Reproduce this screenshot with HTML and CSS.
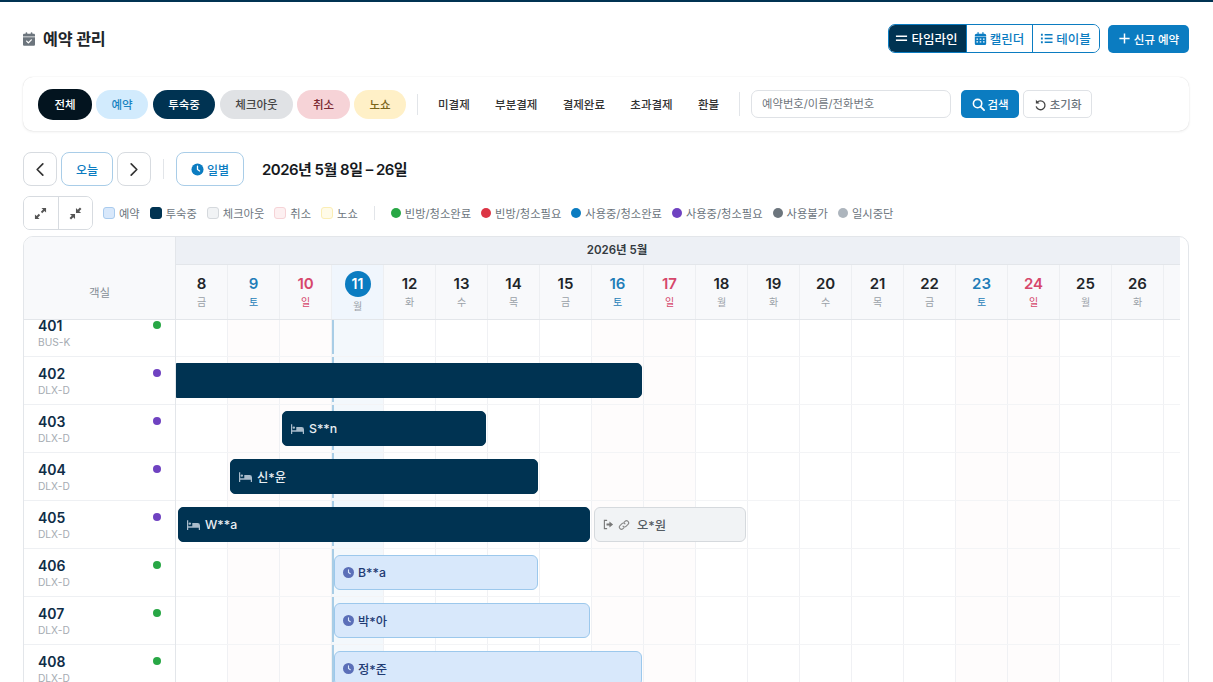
FILE: index.html
```html
<!DOCTYPE html>
<html lang="ko">
<head>
<meta charset="utf-8">
<title>예약 관리</title>
<link rel="stylesheet" href="styles.css">
</head>
<body>
<main class="page">
  <header class="head">
    <h1 class="title">
      <svg class="title-icon" viewBox="0 0 448 512"><path d="M128 0c18 0 32 14 32 32v32h128V32c0-18 14-32 32-32s32 14 32 32v32h48c27 0 48 21 48 48v48H0v-48c0-27 21-48 48-48h48V32c0-18 14-32 32-32zM0 192h448v272c0 27-21 48-48 48H48c-27 0-48-21-48-48V192zm329 113c9-9 9-25 0-34s-25-9-34 0l-95 95-47-47c-9-9-25-9-34 0s-9 25 0 34l64 64c9 9 25 9 34 0l112-112z"/></svg>
      <span>예약 관리</span>
    </h1>
    <div class="head-actions">
      <div class="seg">
        <button class="seg-btn seg-on"><svg class="ic" viewBox="0 0 14 14"><path d="M1 3.800h12v1.700H1zM1 8h12v1.700H1z"/></svg>타임라인</button>
        <button class="seg-btn"><svg class="ic" viewBox="0 0 448 512"><path d="M128 0c14 0 24 11 24 24v40h144V24c0-13 11-24 24-24s24 11 24 24v40h40c35 0 64 29 64 64v48H0v-48c0-35 29-64 64-64h40V24c0-13 11-24 24-24zM0 192h448v256c0 35-29 64-64 64H64c-35 0-64-29-64-64V192zm64 64v48h64v-48H64zm128 0v48h64v-48h-64zm128 0v48h64v-48h-64zM64 368v48h64v-48H64zm128 0v48h64v-48h-64zm128 0v48h64v-48h-64z"/></svg>캘린더</button>
        <button class="seg-btn"><svg class="ic" viewBox="0 0 14 14"><path d="M1 2h2v2H1zM5 2.200h8.500v1.600H5zM1 6h2v2H1zM5 6.200h8.500v1.600H5zM1 10h2v2H1zM5 10.200h8.500v1.600H5z"/></svg>테이블</button>
      </div>
      <button class="new-btn"><svg class="ic" viewBox="0 0 14 14"><path d="M6.200 1.500h1.600v4.700h4.700v1.600H7.800v4.700H6.200V7.800H1.500V6.200h4.700z"/></svg>신규 예약</button>
    </div>
  </header>

  <section class="filters">
    <button class="pill pill-all">전체</button>
    <button class="pill pill-res">예약</button>
    <button class="pill pill-stay">투숙중</button>
    <button class="pill pill-out">체크아웃</button>
    <button class="pill pill-cancel">취소</button>
    <button class="pill pill-noshow">노쇼</button>
    <i class="vsep sep-a"></i>
    <div class="pay">
      <span>미결제</span><span>부분결제</span><span>결제완료</span><span>초과결제</span><span>환불</span>
    </div>
    <i class="vsep sep-b"></i>
    <input class="search" type="text" placeholder="예약번호/이름/전화번호">
    <button class="search-btn"><svg class="ic" viewBox="0 0 14 14"><circle cx="6" cy="6" r="4.500" fill="none" stroke="currentColor" stroke-width="1.700"/><path d="M9.300 9.300l3.700 3.700" stroke="currentColor" stroke-width="1.900" stroke-linecap="round"/></svg>검색</button>
    <button class="reset-btn"><svg class="ic" viewBox="0 0 14 14"><path d="M3.300 4.800A4.800 4.800 0 1 1 2.500 9.500" fill="none" stroke="currentColor" stroke-width="1.400" stroke-linecap="round"/><path d="M2 1.800v4h4z" fill="currentColor"/></svg>초기화</button>
  </section>

  <nav class="toolbar">
    <button class="tool tool-square"><svg class="chev" viewBox="0 0 10 16"><path d="M8 2L2 8l6 6" fill="none" stroke="currentColor" stroke-width="1.800" stroke-linecap="round" stroke-linejoin="round"/></svg></button>
    <button class="tool tool-blue tool-today">오늘</button>
    <button class="tool tool-square"><svg class="chev" viewBox="0 0 10 16"><path d="M2 2l6 6-6 6" fill="none" stroke="currentColor" stroke-width="1.800" stroke-linecap="round" stroke-linejoin="round"/></svg></button>
    <i class="vsep tool-sep"></i>
    <button class="tool tool-blue tool-day"><svg class="ic clock" viewBox="0 0 14 14"><circle cx="7" cy="7" r="6.500" fill="currentColor"/><path d="M7 3.500V7l2.300 1.600" fill="none" stroke="#fff" stroke-width="1.400" stroke-linecap="round"/></svg>일별</button>
    <h2 class="range">2026년 5월 8일 – 26일</h2>
  </nav>

  <div class="legend">
    <div class="zoom-group">
      <button class="zoom-btn"><svg viewBox="0 0 14 14"><path d="M8 1h5v5l-1.800-1.800-2.400 2.400-1.400-1.400 2.400-2.400zM6 13H1V8l1.800 1.800 2.400-2.400 1.400 1.400-2.400 2.400z"/></svg></button>
      <button class="zoom-btn"><svg viewBox="0 0 14 14"><path d="M13 6.500H7.500V1l1.900 1.900L11.800.600 13.400 2.200 11 4.600zM1 7.500h5.500V13l-1.900-1.900-2.400 2.300L.6 11.800 3 9.400z"/></svg></button>
    </div>
    <span class="lg"><i class="sw sw-res"></i>예약</span>
    <span class="lg"><i class="sw sw-stay"></i>투숙중</span>
    <span class="lg"><i class="sw sw-out"></i>체크아웃</span>
    <span class="lg"><i class="sw sw-cancel"></i>취소</span>
    <span class="lg"><i class="sw sw-noshow"></i>노쇼</span>
    <i class="vsep lg-sep"></i>
    <span class="lg"><i class="dot d-green"></i>빈방/청소완료</span>
    <span class="lg"><i class="dot d-red"></i>빈방/청소필요</span>
    <span class="lg"><i class="dot d-blue"></i>사용중/청소완료</span>
    <span class="lg"><i class="dot d-purple"></i>사용중/청소필요</span>
    <span class="lg"><i class="dot d-gray"></i>사용불가</span>
    <span class="lg"><i class="dot d-light"></i>일시중단</span>
  </div>

  <section class="timeline">
    <div class="tl-head">
      <div class="corner">객실</div>
      <div class="head-right">
        <div class="month">2026년 5월</div>
        <div class="days">
          <div class="day"><b>8</b><small>금</small></div>
          <div class="day sat"><b>9</b><small>토</small></div>
          <div class="day sun"><b>10</b><small>일</small></div>
          <div class="day today"><b>11</b><small>월</small></div>
          <div class="day"><b>12</b><small>화</small></div>
          <div class="day"><b>13</b><small>수</small></div>
          <div class="day"><b>14</b><small>목</small></div>
          <div class="day"><b>15</b><small>금</small></div>
          <div class="day sat"><b>16</b><small>토</small></div>
          <div class="day sun"><b>17</b><small>일</small></div>
          <div class="day"><b>18</b><small>월</small></div>
          <div class="day"><b>19</b><small>화</small></div>
          <div class="day"><b>20</b><small>수</small></div>
          <div class="day"><b>21</b><small>목</small></div>
          <div class="day"><b>22</b><small>금</small></div>
          <div class="day sat"><b>23</b><small>토</small></div>
          <div class="day sun"><b>24</b><small>일</small></div>
          <div class="day"><b>25</b><small>월</small></div>
          <div class="day"><b>26</b><small>화</small></div>
          <div class="day"></div>
        </div>
      </div>
    </div>
    <div class="tl-body">
      <div class="rooms">
        <div class="room"><div><b>401</b><small>BUS-K</small></div><i class="dot room-dot d-green"></i></div>
        <div class="room"><div><b>402</b><small>DLX-D</small></div><i class="dot room-dot d-purple"></i></div>
        <div class="room"><div><b>403</b><small>DLX-D</small></div><i class="dot room-dot d-purple"></i></div>
        <div class="room"><div><b>404</b><small>DLX-D</small></div><i class="dot room-dot d-purple"></i></div>
        <div class="room"><div><b>405</b><small>DLX-D</small></div><i class="dot room-dot d-purple"></i></div>
        <div class="room"><div><b>406</b><small>DLX-D</small></div><i class="dot room-dot d-green"></i></div>
        <div class="room"><div><b>407</b><small>DLX-D</small></div><i class="dot room-dot d-green"></i></div>
        <div class="room"><div><b>408</b><small>DLX-D</small></div><i class="dot room-dot d-green"></i></div>
      </div>
      <div class="lanes">
        <div class="cols">
          <i></i><i class="c-we"></i><i class="c-we"></i><i class="c-today"></i><i></i><i></i><i></i><i></i><i class="c-we"></i><i class="c-we"></i><i></i><i></i><i></i><i></i><i></i><i class="c-we"></i><i class="c-we"></i><i></i><i></i><i></i>
        </div>
        <div class="now-line"></div>
        <div class="lane"></div>
        <div class="lane"><div class="bar stay b402"></div></div>
        <div class="lane"><div class="bar stay b403"><svg class="bed" viewBox="0 0 16 12"><path d="M0 0h1.500v7.500H6.500V3.500H13a3 3 0 0 1 3 3V12h-1.500V9.500h-13V12H0zM2 4.300a1.500 1.500 0 1 1 3 0 1.500 1.500 0 0 1-3 0z"/></svg>S**n</div></div>
        <div class="lane"><div class="bar stay b404"><svg class="bed" viewBox="0 0 16 12"><path d="M0 0h1.500v7.500H6.500V3.500H13a3 3 0 0 1 3 3V12h-1.500V9.500h-13V12H0zM2 4.300a1.500 1.500 0 1 1 3 0 1.500 1.500 0 0 1-3 0z"/></svg>신*윤</div></div>
        <div class="lane">
          <div class="bar stay b405"><svg class="bed" viewBox="0 0 16 12"><path d="M0 0h1.500v7.500H6.500V3.500H13a3 3 0 0 1 3 3V12h-1.500V9.500h-13V12H0zM2 4.300a1.500 1.500 0 1 1 3 0 1.500 1.500 0 0 1-3 0z"/></svg>W**a</div>
          <div class="bar out b405b">
            <svg class="out-ic" viewBox="0 0 12 12"><path d="M4 1.500H1.500v9H4" fill="none" stroke="currentColor" stroke-width="1.200" stroke-linecap="round"/><path d="M3.800 5h3.200V2.800L11 6 7 9.200V7H3.800z" fill="currentColor"/></svg>
            <svg class="link-ic" viewBox="0 0 12 12"><path d="M5 7.200a2 2 0 0 0 3 .2l2-2a2.100 2.100 0 0 0-3-3l-.8.800M7 4.800a2 2 0 0 0-3-.2l-2 2a2.100 2.100 0 0 0 3 3l.8-.8" fill="none" stroke="currentColor" stroke-width="1.100" stroke-linecap="round"/></svg>
            오*원
          </div>
        </div>
        <div class="lane"><div class="bar res b406"><svg class="res-ic" viewBox="0 0 14 14"><circle cx="7" cy="7" r="7" fill="currentColor"/><path d="M7 3.500V7l2.300 1.600" fill="none" stroke="#d9e8fb" stroke-width="1.400" stroke-linecap="round"/></svg>B**a</div></div>
        <div class="lane"><div class="bar res b407"><svg class="res-ic" viewBox="0 0 14 14"><circle cx="7" cy="7" r="7" fill="currentColor"/><path d="M7 3.500V7l2.300 1.600" fill="none" stroke="#d9e8fb" stroke-width="1.400" stroke-linecap="round"/></svg>박*아</div></div>
        <div class="lane"><div class="bar res b408"><svg class="res-ic" viewBox="0 0 14 14"><circle cx="7" cy="7" r="7" fill="currentColor"/><path d="M7 3.500V7l2.300 1.600" fill="none" stroke="#d9e8fb" stroke-width="1.400" stroke-linecap="round"/></svg>정*준</div></div>
      </div>
    </div>
  </section>
</main>
</body>
</html>
```

FILE: styles.css
```css
* { box-sizing: border-box; }
html, body { margin: 0; height: 100%; overflow: hidden; background: #fff; }
body {
  font-family: Inter, "Noto Sans CJK KR", "Noto Sans", sans-serif;
  color: #212529;
  border-top: 2px solid #003352;
}
button { font: inherit; cursor: pointer; }
i { display: block; font-style: normal; }
.page { padding: 22px 24px 0 23px; }

.head { display: flex; align-items: center; justify-content: space-between; height: 29px; }
.title { display: flex; align-items: center; gap: 8px; margin: 0; padding-bottom: 2px; font-size: 16.200px; font-weight: 700; letter-spacing: -0.01em; color: #212529; }
.title-icon { width: 12px; height: 14px; fill: #6c757d; margin-top: 2px; }
.head-actions { display: flex; align-items: center; gap: 8px; }
.ic { width: 13px; height: 13px; fill: currentColor; flex: none; }
.seg { display: flex; height: 29px; border: 1px solid #0b7cc1; border-radius: 7px; overflow: hidden; }
.seg-btn { display: flex; align-items: center; justify-content: center; gap: 3px; padding: 0 1px 0 0; border: 0; border-left: 1px solid #0b7cc1; background: #fff; color: #0b7cc1; font-size: 12.500px; font-weight: 500; width: 66px; }
.seg-btn:last-child { width: 67px; }
.seg-on { width: 78px; margin: -1px 0 -1px -1px; border: 0; background: #003352; color: #fff; gap: 3px; }
.new-btn { display: flex; align-items: center; justify-content: center; gap: 3px; width: 81px; height: 28px; border: 0; border-radius: 5px; background: #0b7cc1; color: #fff; font-size: 11.500px; font-weight: 500; }

.filters { display: flex; align-items: center; height: 54px; margin-top: 24px; padding: 0 15px; border-radius: 10px; background: #fff; box-shadow: 0 0 1px rgba(0,0,0,.16), 0 1px 3px rgba(0,0,0,.07); }
.pill { height: 29px; margin-right: 4px; padding: 0; border: 1px solid transparent; border-radius: 15px; font-size: 11.500px; font-weight: 500; color: #444; }
.pill-all { width: 54px; height: 31px; background: #03141f; color: #fff; }
.pill-res { width: 52px; background: #d2ebfd; color: #1b84c2; margin-right: 5px; }
.pill-stay { width: 62px; background: #003352; color: #fff; margin-right: 5px; }
.pill-out { width: 73px; background: #e0e2e5; color: #444; }
.pill-cancel { width: 53px; background: #f6d3d7; color: #7a2730; }
.pill-noshow { width: 52px; background: #fff0c7; color: #7b6418; margin: 0; }
.vsep { width: 1px; background: #e2e5e9; flex: none; }
.sep-a { height: 21px; margin: 0 20px 0 11px; }
.sep-b { height: 24px; margin: 0 11px 0 20px; }
.pay { display: flex; gap: 25.300px; font-size: 11.500px; font-weight: 500; color: #333; white-space: nowrap; }
.search { width: 200px; height: 28px; padding: 0 10px; border: 1px solid #dfe2e6; border-radius: 7px; font: inherit; font-size: 11.300px; background: #fff; outline: 0; }
.search::placeholder { color: #6f767d; }
.search-btn, .reset-btn { display: flex; align-items: center; justify-content: center; gap: 3px; height: 28px; border-radius: 5px; font-size: 11.500px; font-weight: 500; }
.search-btn { width: 58px; margin-left: 10px; border: 0; background: #0b7cc1; color: #fff; }
.reset-btn { width: 69px; margin-left: 4px; border: 1px solid #dfe2e6; background: #fff; color: #6c757d; }
.reset-btn .ic { color: #444; }

.toolbar { display: flex; align-items: center; height: 34px; margin-top: 21px; }
.tool { display: flex; align-items: center; justify-content: center; gap: 3px; height: 34px; padding: 0; border-radius: 8px; background: #fff; border: 1px solid #d7dbe0; font-size: 12px; font-weight: 500; color: #333; margin-right: 4px; }
.tool-square { width: 34px; }
.chev { width: 10px; height: 15px; }
.tool-blue { border-color: #a9cde8; color: #0b7cc1; }
.tool-today { width: 52px; }
.tool-day { width: 68px; margin-right: 18px; }
.clock { width: 13px; height: 13px; }
.tool-sep { height: 20px; margin: 0 12px 0 8px; }
.range { margin: 0; padding-bottom: 2px; font-size: 15px; font-weight: 600; letter-spacing: -0.035em; color: #16191d; }

.legend { display: flex; align-items: center; height: 34px; margin-top: 10px; font-size: 11.270px; color: #6c757d; }
.zoom-group { display: flex; width: 70px; height: 34px; margin-right: 10px; border: 1px solid #d7dbe0; border-radius: 7px; overflow: hidden; }
.zoom-btn { display: flex; align-items: center; justify-content: center; flex: 1; padding: 0; border: 0; background: #fff; }
.zoom-btn + .zoom-btn { border-left: 1px solid #d7dbe0; }
.zoom-btn svg { width: 13px; height: 13px; fill: #555; }
.lg { display: flex; align-items: center; gap: 4px; margin-right: 10px; white-space: nowrap; }
.sw { width: 12px; height: 12px; border-radius: 3px; border: 1px solid; }
.sw-res { background: #d8e8fb; border-color: #a9cbee; }
.sw-stay { background: #003352; border-color: #003352; }
.sw-out { background: #f1f3f5; border-color: #d5d9dd; }
.sw-cancel { background: #fdf0f1; border-color: #f6d3d7; }
.sw-noshow { background: #fffbe8; border-color: #fbeeb5; }
.lg-sep { height: 14px; margin: 0 16px 0 6px; }
.dot { width: 10px; height: 10px; border-radius: 50%; flex: none; }
.d-green { background: #28a745; }
.d-red { background: #dc3545; }
.d-blue { background: #0b7cc1; }
.d-purple { background: #6f42c1; }
.d-gray { background: #6c757d; }
.d-light { background: #adb5bd; }

.timeline { margin-top: 6px; border: 1px solid #e3e6ea; border-radius: 10px; overflow: hidden; background: #fff; }
.tl-head { display: flex; height: 83px; }
.corner { display: flex; align-items: center; justify-content: center; flex: none; width: 152px; padding-top: 27px; border-right: 1px solid #e3e6ea; border-bottom: 1px solid #e3e6ea; background: #f8f9fb; font-size: 11.500px; color: #868e96; }
.head-right { width: 1004px; }
.month { height: 27px; padding-right: 122px; background: #edf0f5; font-size: 11.500px; font-weight: 600; line-height: 27px; text-align: center; color: #343a40; }
.days { display: flex; height: 56px; border-bottom: 1px solid #e3e6ea; border-top: 1px solid #e3e6ea; background: #f8f9fb; }
.day { position: relative; display: flex; flex-direction: column; align-items: center; flex: none; width: 52px; padding-top: 9px; border-right: 1px solid #edeff2; }
.day:last-child { width: 16px; border: 0; }
.day b { font-size: 15px; font-weight: 600; line-height: 20px; color: #212529; }
.day small { font-size: 10px; line-height: 14px; margin-top: 1px; color: #9aa1a8; }
.sat b, .sat small { color: #1f7db8; }
.sun b, .sun small { color: #d6476b; }
.today { background: #f0f6fd; padding-top: 6px; }
.today b { width: 26px; height: 26px; border-radius: 50%; background: #0b7cc1; color: #fff; font-size: 14px; line-height: 26px; text-align: center; }
.today small { margin-top: 2px; color: #9aa1a8; }

.tl-body { display: flex; height: 373px; overflow: hidden; }
.rooms { flex: none; width: 152px; margin-top: -11px; border-right: 1px solid #e3e6ea; }
.room { display: flex; justify-content: space-between; height: 48px; padding: 6px 14px 0 14px; border-bottom: 1px solid #eef0f3; }
.room b { display: block; font-size: 14px; font-weight: 600; line-height: 21px; color: #0f2d47; }
.room small { display: block; font-size: 10.200px; line-height: 14px; margin-top: -1px; color: #a5abb2; }
.room-dot { width: 8px; height: 8px; margin-top: 6px; }

.lanes { position: relative; width: 1004px; margin-top: -11px; overflow: hidden; }
.cols { position: absolute; inset: 11px 0 0 0; display: flex; }
.cols i { flex: none; width: 52px; border-right: 1px solid #f0f1f4; }
.cols .c-we { background: #fefcfc; }
.cols .c-today { background: #f3f8fc; }
.now-line { position: absolute; top: 0; bottom: 0; left: 156px; width: 2px; background: repeating-linear-gradient(to bottom, #a8cde6 0 45px, transparent 45px 48px); }
.lane { position: relative; height: 48px; border-bottom: 1px solid #f3f4f6; }
.bar { position: absolute; top: 6px; height: 35px; display: flex; align-items: center; gap: 5px; padding: 0 8px; border: 1px solid; border-radius: 5px; font-size: 12.300px; font-weight: 500; white-space: nowrap; }
.stay { background: #003352; border-color: #003352; color: #e9eef2; }
.res { gap: 4px; background: #d8e8fb; border-color: #9cc8ec; color: #1f3b73; border-radius: 6px; }
.out { background: #f1f3f5; border-color: #d5d9dd; color: #555c63; border-radius: 6px; }
.bed { width: 13px; height: 10px; fill: #a9bccb; flex: none; }
.res-ic { width: 11px; height: 11px; color: #5b6fb8; flex: none; }
.out-ic { width: 11px; height: 11px; color: #777; flex: none; margin-right: -1px; }
.link-ic { width: 12px; height: 12px; color: #888; flex: none; margin-right: 2px; }
.b402 { left: 0; width: 466px; border-radius: 0 5px 5px 0; }
.b403 { left: 106px; width: 204px; }
.b404 { left: 54px; width: 308px; }
.b405 { left: 2px; width: 412px; }
.b405b { left: 418px; width: 152px; }
.b406 { left: 158px; width: 204px; }
.b407 { left: 158px; width: 256px; }
.b408 { left: 158px; width: 308px; }
```
